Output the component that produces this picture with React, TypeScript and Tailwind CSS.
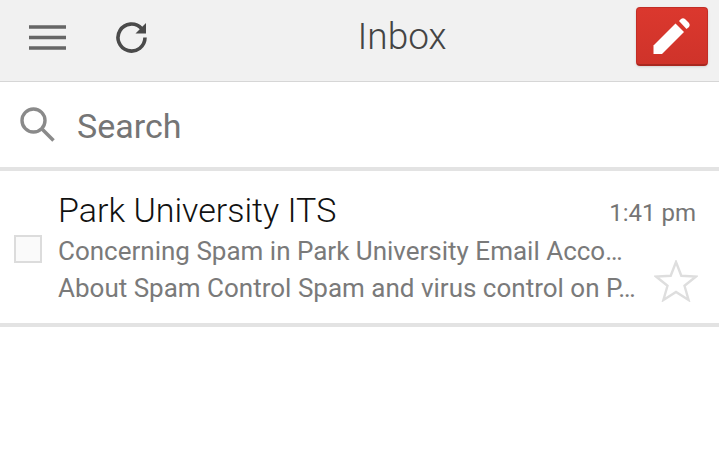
const font = { fontFamily: 'Roboto, sans-serif' };

function MenuIcon() {
  return (
    <svg width="38" height="28" viewBox="0 0 38 28" className="block">
      <path d="M0 3h37M0 13.500h37M0 24h37" stroke="#666" strokeWidth="3.400" fill="none" />
    </svg>
  );
}

function RefreshIcon() {
  return (
    <svg width="34" height="34" viewBox="0 0 34 34" className="block">
      <path d="M26.500 8.500A13.500 13.500 0 1 0 30 17.500" stroke="#4a4a4a" strokeWidth="3.600" fill="none" />
      <path d="M20.500 13.500L31 3V13.500Z" fill="#4a4a4a" />
    </svg>
  );
}

function SearchIcon() {
  return (
    <svg width="37" height="37" viewBox="0 0 37 37" className="block">
      <circle cx="14.500" cy="14.500" r="11.500" stroke="#8a8a8a" strokeWidth="3.400" fill="none" />
      <path d="M23 23L34.500 34.500" stroke="#8a8a8a" strokeWidth="3.600" fill="none" />
    </svg>
  );
}

function PencilIcon() {
  return (
    <svg width="38" height="38" viewBox="0 0 38 38" className="block">
      <path d="M0.500 37L0.500 28.500L22.500 6.500L31 15L9 37Z" fill="#fff" />
      <path d="M26 4L28 2Q30 0.500 32 2L36 6Q37.500 8 36 10L33.500 12Z" fill="#fff" />
    </svg>
  );
}

function StarIcon() {
  return (
    <svg width="44" height="42" viewBox="0 0 44 42" className="block">
      <path
        d="M22 2L27.300 15.800L42 16.500L30.500 25.800L34.600 40L22 32L9.400 40L13.500 25.800L2 16.500L16.700 15.800Z"
        fill="#fff"
        stroke="#dedede"
        strokeWidth="2.400"
      />
    </svg>
  );
}

export default function App() {
  return (
    <div className="w-[719px] h-[455px] bg-white overflow-hidden" style={font}>
      <header className="h-[82px] bg-[#f1f1f1] border-b border-[#d6d6d6] flex items-center pl-[29px] pr-[11px]">
        <div className="mb-[6px]">
          <MenuIcon />
        </div>
        <button className="ml-[48px] mb-[8px]">
          <RefreshIcon />
        </button>
        <h1 className="flex-1 text-center text-[37px] font-light text-[#444] pl-[19px] mb-[8px] leading-none">Inbox</h1>
        <button className="w-[72px] h-[59px] mb-[8px] bg-gradient-to-b from-[#db382e] to-[#cf332a] rounded-[4px] border border-[#c22e26] border-b-2 border-b-[#a92820] shadow-sm flex items-center justify-center">
          <PencilIcon />
        </button>
      </header>

      <div className="h-[89px] border-b-4 border-[#e3e3e3] flex items-center pl-[19px]">
        <SearchIcon />
        <span className="ml-[21px] mt-[2px] text-[34px] text-[#757575] leading-none">Search</span>
      </div>

      <div className="h-[156px] border-b-4 border-[#e3e3e3] flex pl-[14px] pr-[23px]">
        <div className="w-[28px] h-[28px] mt-[64px] border-2 border-[#dcdcdc] bg-[#fafafa] shrink-0" />
        <div className="ml-[16px] flex-1 min-w-0 pt-[19px]">
          <div className="flex justify-between h-[42px]">
            <span className="text-[34px] font-light text-[#111] leading-[40px]">Park University ITS</span>
            <span className="text-[24px] text-[#757575] leading-[46px]">1:41 pm</span>
          </div>
          <div className="flex mt-[1px]">
            <div className="text-[26px] text-[#7a7a7a] leading-[37px] whitespace-nowrap">
              <p>Concerning Spam in Park University Email Acco…</p>
              <p>About Spam Control Spam and virus control on P…</p>
            </div>
            <div className="ml-auto mt-[27px] mr-[-2px]">
              <StarIcon />
            </div>
          </div>
        </div>
      </div>
    </div>
  );
}
